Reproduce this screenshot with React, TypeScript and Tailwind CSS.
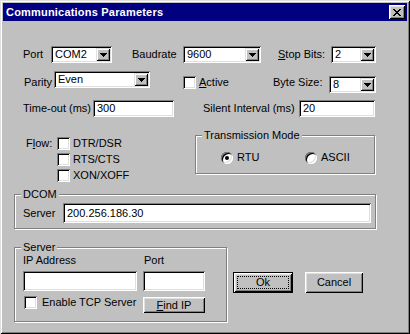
const sunken =
  'bg-white shadow-[inset_1px_1px_0_#808080,inset_-1px_-1px_0_#ffffff,inset_2px_2px_0_#000000,inset_-2px_-2px_0_#dfdfdf]'
const raised =
  'bg-[#c0c0c0] shadow-[inset_1px_1px_0_#dfdfdf,inset_-1px_-1px_0_#000000,inset_2px_2px_0_#ffffff,inset_-2px_-2px_0_#808080]'
const push =
  'bg-[#c0c0c0] shadow-[inset_1px_1px_0_#ffffff,inset_-1px_-1px_0_#000000,inset_2px_2px_0_#dfdfdf,inset_-2px_-2px_0_#808080]'
const etched = 'relative border border-[#808080] shadow-[inset_1px_1px_0_#ffffff,1px_1px_0_#ffffff]'

function Arrow() {
    return (
        <svg width="7" height="4" viewBox="0 0 7 4" shapeRendering="crispEdges">
            <rect x="0" y="0" width="7" height="1" fill="#000" />
            <rect x="1" y="1" width="5" height="1" fill="#000" />
            <rect x="2" y="2" width="3" height="1" fill="#000" />
            <rect x="3" y="3" width="1" height="1" fill="#000" />
        </svg>
    )
}

function CloseGlyph() {
    const rows = [
        [0, 2, 6, 2],
        [1, 2, 5, 2],
        [2, 4],
        [3, 2],
        [2, 4],
        [1, 2, 5, 2],
        [0, 2, 6, 2],
    ]
    return (
        <svg width="8" height="7" viewBox="0 0 8 7" shapeRendering="crispEdges">
            {rows.map((r, y) =>
                r.length === 4 ? (
                    <g key={y}>
                        <rect x={r[0]} y={y} width={r[1]} height="1" fill="#000" />
                        <rect x={r[2]} y={y} width={r[3]} height="1" fill="#000" />
                    </g>
                ) : (
                    <rect key={y} x={r[0]} y={y} width={r[1]} height="1" fill="#000" />
                )
            )}
        </svg>
    )
}

function Combo({ value, className }: { value: string; className: string }) {
    return (
        <div className={`${className} flex items-center ${sunken}`}>
            <span className="flex-1 pl-[4px] leading-[13px]">{value}</span>
            <span className={`mr-[2px] w-[14px] h-[13px] flex items-center justify-center ${raised}`}>
                <Arrow />
            </span>
        </div>
    )
}

function Field({ value = '', className }: { value?: string; className: string }) {
    return (
        <div className={`${className} flex items-center pl-[4px] leading-[13px] ${sunken}`}>{value}</div>
    )
}

function Check({ label, className = '' }: { label: React.ReactNode; className?: string }) {
    return (
        <div className={`flex items-center ${className}`}>
            <span className={`w-[13px] h-[13px] ${sunken}`}></span>
            <span className="ml-[3px] leading-[13px]">{label}</span>
        </div>
    )
}

function Radio({ checked }: { checked?: boolean }) {
    return (
        <span className={`w-[12px] h-[12px] rounded-full flex items-center justify-center ${sunken}`}>
            {checked && <span className="w-[4px] h-[4px] rounded-full bg-black"></span>}
        </span>
    )
}

function GroupLabel({ children }: { children: React.ReactNode }) {
    return (
        <span className="absolute -top-[7px] left-[6px] px-[2px] bg-[#c0c0c0] leading-[13px]">{children}</span>
    )
}

export default function App() {
    return (
        <div className="w-[410px] h-[334px] bg-[#c0c0c0] flex flex-col text-[11px] leading-[13px] text-black font-['Liberation_Sans',Arial,sans-serif] shadow-[inset_1px_1px_0_#dfdfdf,inset_-1px_-1px_0_#000000,inset_2px_2px_0_#ffffff,inset_-2px_-2px_0_#808080]">
            {/* title bar */}
            <div className="mt-[3px] mx-[3px] h-[18px] bg-[#000080] flex items-center justify-between pl-[3px] pr-[2px]">
                <span className="text-white font-bold tracking-[0.2px]">Communications Parameters</span>
                <span className={`w-[16px] h-[14px] flex items-center justify-center ${push}`}>
                    <CloseGlyph />
                </span>
            </div>

            {/* port / baudrate / stop bits */}
            <div className="mt-[25px] h-[17px] flex items-center pl-[23px]">
                <span className="w-[28px]">Port</span>
                <Combo value="COM2" className="w-[61px] h-[17px]" />
                <span className="ml-[20px] w-[51px]">Baudrate</span>
                <Combo value="9600" className="w-[78px] h-[17px]" />
                <span className="ml-[17px] w-[53px]"><u>S</u>top Bits:</span>
                <Combo value="2" className="w-[45px] h-[17px]" />
            </div>

            {/* parity / active / byte size */}
            <div className="mt-[8px] flex items-start pl-[24px]">
                <span className="w-[30px] mt-[5px]">Parity</span>
                <Combo value="Even" className="w-[96px] h-[17px]" />
                <Check label={<><u>A</u>ctive</>} className="ml-[33px] mt-[5px] w-[90px]" />
                <span className="w-[56px] mt-[5px]">Byte Size:</span>
                <Combo value="8" className="w-[47px] h-[17px] mt-[5px]" />
            </div>

            {/* timeouts */}
            <div className="mt-[7px] h-[17px] flex items-center pl-[23px]">
                <span className="w-[70px]">Time-out (ms)</span>
                <Field value="300" className="w-[81px] h-[17px]" />
                <span className="ml-[29px] w-[96px]">Silent Interval (ms)</span>
                <Field value="20" className="w-[76px] h-[17px]" />
            </div>

            {/* flow + transmission mode */}
            <div className="mt-[18px] h-[50px] flex items-start pl-[26px]">
                <span className="w-[31px] mt-[2px]">F<u>l</u>ow:</span>
                <div className="w-[138px] mt-[2px] flex flex-col gap-[3px]">
                    <Check label="DTR/DSR" />
                    <Check label="RTS/CTS" />
                    <Check label="XON/XOFF" />
                </div>
                <div className={`${etched} w-[180px] h-[39px]`}>
                    <GroupLabel>Transmission Mode</GroupLabel>
                    <div className="mt-[15px] pl-[25px] flex items-center">
                        <div className="w-[84px] flex items-center">
                            <Radio checked />
                            <span className="ml-[4px]">RTU</span>
                        </div>
                        <div className="flex items-center">
                            <Radio />
                            <span className="ml-[4px]">ASCII</span>
                        </div>
                    </div>
                </div>
            </div>

            {/* DCOM */}
            <div className={`${etched} mt-[9px] ml-[14px] w-[362px] h-[35px]`}>
                <GroupLabel>DCOM</GroupLabel>
                <div className="mt-[8px] pl-[8px] h-[20px] flex items-center">
                    <span className="w-[40px]">Server</span>
                    <Field value="200.256.186.30" className="w-[308px] h-[20px]" />
                </div>
            </div>

            {/* server + buttons */}
            <div className="mt-[18px] pl-[14px] flex items-start">
                <div className={`${etched} w-[213px] h-[75px]`}>
                    <GroupLabel>Server</GroupLabel>
                    <div className="mt-[6px] pl-[8px] flex">
                        <span className="w-[121px]">IP Address</span>
                        <span>Port</span>
                    </div>
                    <div className="mt-[4px] pl-[8px] flex">
                        <Field className="w-[114px] h-[20px]" />
                        <Field className="ml-[6px] w-[62px] h-[20px]" />
                    </div>
                    <div className="mt-[5px] pl-[9px] flex items-start">
                        <div className="w-[119px] flex items-center">
                            <span className={`w-[13px] h-[13px] ${sunken}`}></span>
                            <span className="ml-[5px]">Enable TCP Server</span>
                        </div>
                        <div className={`mt-[1px] w-[62px] h-[16px] flex items-center justify-center ${push}`}>
                            <span><u>F</u>ind IP</span>
                        </div>
                    </div>
                </div>
                <div className={`ml-[6px] mt-[25px] w-[60px] h-[21px] flex p-[3px] border border-black ${push}`}>
                    <span className="flex-1 flex items-center justify-center border border-dotted border-black">Ok</span>
                </div>
                <div className={`ml-[12px] mt-[25px] w-[58px] h-[21px] flex items-center justify-center ${push}`}>
                    Cancel
                </div>
            </div>
        </div>
    )
}
